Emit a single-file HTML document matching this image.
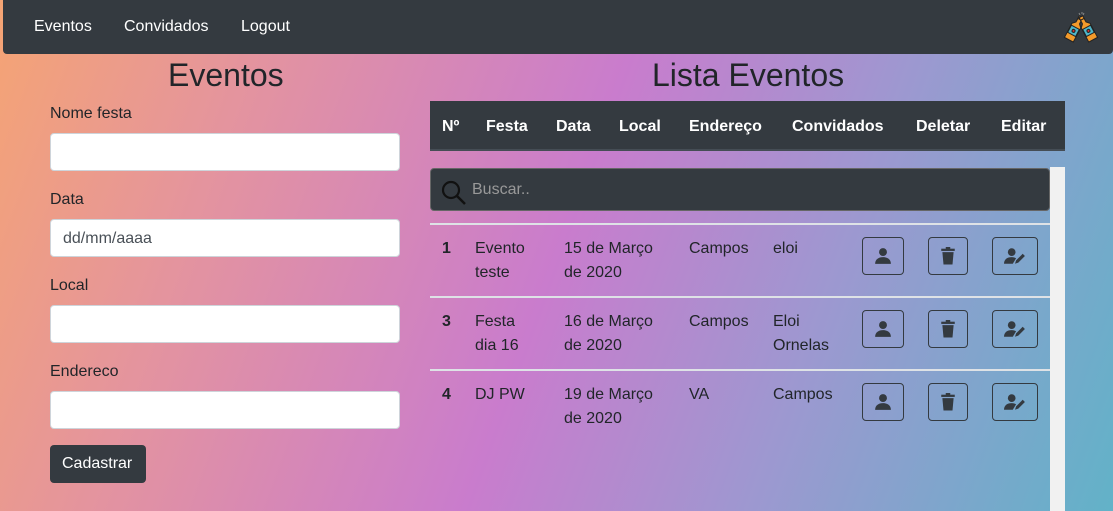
<!DOCTYPE html>
<html><head><meta charset="utf-8"><style>
*{box-sizing:border-box;margin:0;padding:0}
body{width:1113px;height:511px;overflow:hidden;font-family:"Liberation Sans",sans-serif;color:#212529;position:relative;
background:linear-gradient(110deg,#f5a474 0%,#e393a0 22%,#c97ccd 50%,#9d98d0 72%,#62b2c8 100%);}
.nav{position:absolute;left:3px;top:0;width:1110px;height:54px;background:#343a40;border-radius:0 0 4px 4px;}
.nav a{position:absolute;top:18px;color:#fff;font-size:16px;}
h1{position:absolute;font-weight:400;font-size:32px;top:57px;}
label{position:absolute;left:50px;font-size:16px;}
.inp{position:absolute;left:50px;width:350px;height:38px;background:#fff;border:1px solid #ced4da;border-radius:4px;font-size:16px;padding:10px 12px;color:#495057}
.btn{position:absolute;left:50px;top:445px;width:96px;height:38px;background:#343a40;color:#fff;border-radius:4px;font-size:16px;padding:10px 12px;}
.th{position:absolute;left:430px;top:101px;width:635px;height:50px;background:#343a40;border-bottom:2px solid #454d55}
.th span{position:absolute;top:17px;color:#fff;font-weight:700;font-size:16px}
.scroll{position:absolute;left:1050px;top:167px;width:15px;height:344px;background:#f1f1f1}
.search{position:absolute;left:430px;top:168px;width:620px;height:43px;background:#343a40;border-radius:4px;border:1px solid #666}
.search span{position:absolute;left:41px;top:12px;color:#999;font-size:16px}
.hr{position:absolute;left:430px;width:620px;height:2px;background:#dee2e6}
.c{position:absolute;font-size:16px;line-height:24px}
.ib{position:absolute;width:42px;height:38px;border:1px solid #343a40;border-radius:4px}
.ib svg{position:absolute;left:11px;top:9px}
</style></head><body>
<div class="nav"><a style="left:31px">Eventos</a><a style="left:121px">Convidados</a><a style="left:238px">Logout</a>
<svg style="position:absolute;left:1060px;top:10px" width="36" height="36" viewBox="0 0 36 36"><g stroke="#222" stroke-width="1"><g transform="rotate(28 11 20)"><rect x="9" y="5" width="4" height="3" fill="#f39a2b"/><path d="M9 8h4v4l3 3v16h-10v-16l3-3z" fill="#f39a2b"/><rect x="6.5" y="17" width="9" height="8" fill="#4fb5c9"/><circle cx="11" cy="21" r="1.5" fill="#d33"/></g><g transform="rotate(-28 25 20)"><rect x="23" y="5" width="4" height="3" fill="#f39a2b"/><path d="M23 8h4v4l3 3v16h-10v-16l3-3z" fill="#f39a2b"/><rect x="20.5" y="17" width="9" height="8" fill="#4fb5c9"/><circle cx="25" cy="21" r="1.5" fill="#d33"/></g></g><path d="M16 3l1 2M19 2v2M21 3l-1 2" stroke="#888" stroke-width="1"/></svg></div>
<h1 style="left:168px">Eventos</h1>
<h1 style="left:652px">Lista Eventos</h1>
<label style="top:105px">Nome festa</label><div class="inp" style="top:133px"></div>
<label style="top:191px">Data</label><div class="inp" style="top:219px">dd/mm/aaaa</div>
<label style="top:277px">Local</label><div class="inp" style="top:305px"></div>
<label style="top:363px">Endereco</label><div class="inp" style="top:391px"></div>
<div class="btn">Cadastrar</div>
<div class="th"><span style="left:12px">Nº</span><span style="left:56px">Festa</span><span style="left:126px">Data</span><span style="left:189px">Local</span><span style="left:259px">Endereço</span><span style="left:362px">Convidados</span><span style="left:486px">Deletar</span><span style="left:571px">Editar</span></div>
<div class="scroll"></div>
<div class="search"><svg style="position:absolute;left:10px;top:11px" width="26" height="26" viewBox="0 0 26 26"><circle cx="10" cy="10" r="8" fill="none" stroke="#111" stroke-width="2.2"/><path d="M16 16l8 8" stroke="#111" stroke-width="2.5"/></svg><span>Buscar..</span></div>
<div class="hr" style="top:223px"></div><div class="hr" style="top:296px"></div><div class="hr" style="top:369px"></div>
<div class="c" style="left:442px;top:237px;font-weight:700">1</div><div class="c" style="left:475px;top:237px">Evento<br>teste</div><div class="c" style="left:564px;top:237px">15 de Março<br>de 2020</div><div class="c" style="left:689px;top:237px">Campos</div><div class="c" style="left:773px;top:237px">eloi</div>
<div class="c" style="left:442px;top:310px;font-weight:700">3</div><div class="c" style="left:475px;top:310px">Festa<br>dia 16</div><div class="c" style="left:564px;top:310px">16 de Março<br>de 2020</div><div class="c" style="left:689px;top:310px">Campos</div><div class="c" style="left:773px;top:310px">Eloi<br>Ornelas</div>
<div class="c" style="left:442px;top:383px;font-weight:700">4</div><div class="c" style="left:475px;top:383px">DJ PW</div><div class="c" style="left:564px;top:383px">19 de Março<br>de 2020</div><div class="c" style="left:689px;top:383px">VA</div><div class="c" style="left:773px;top:383px">Campos</div>
<div id="btns"></div>
<script>
var u='<svg width="18" height="18" viewBox="0 0 16 16"><circle cx="8" cy="4.5" r="3.5" fill="#343a40"/><path d="M1 15c0-4 3-6 7-6s7 2 7 6z" fill="#343a40"/></svg>';
var t='<svg width="18" height="18" viewBox="0 0 16 16"><rect x="2" y="1.5" width="12" height="2" fill="#343a40"/><rect x="6" y="0" width="4" height="2" fill="#343a40"/><path d="M3 4.5h10l-1 11h-8z" fill="#343a40"/></svg>';
var e='<svg width="22" height="18" viewBox="0 0 20 16"><circle cx="7" cy="4.5" r="3.5" fill="#343a40"/><path d="M0 15c0-4 3-6 7-6 2 0 3 .5 4 1l-3 5z" fill="#343a40"/><path d="M10 15l1-3 6-6 2 2-6 6z" fill="#343a40"/></svg>';
var h='';[237,310,383].forEach(function(y){h+='<div class="ib" style="left:862px;top:'+y+'px">'+u+'</div><div class="ib" style="left:928px;top:'+y+'px;width:40px">'+t.replace('<svg','<svg style="left:10px"')+'</div><div class="ib" style="left:992px;top:'+y+'px;width:46px">'+e+'</div>';});
document.getElementById('btns').innerHTML=h;
</script>
</body></html>
